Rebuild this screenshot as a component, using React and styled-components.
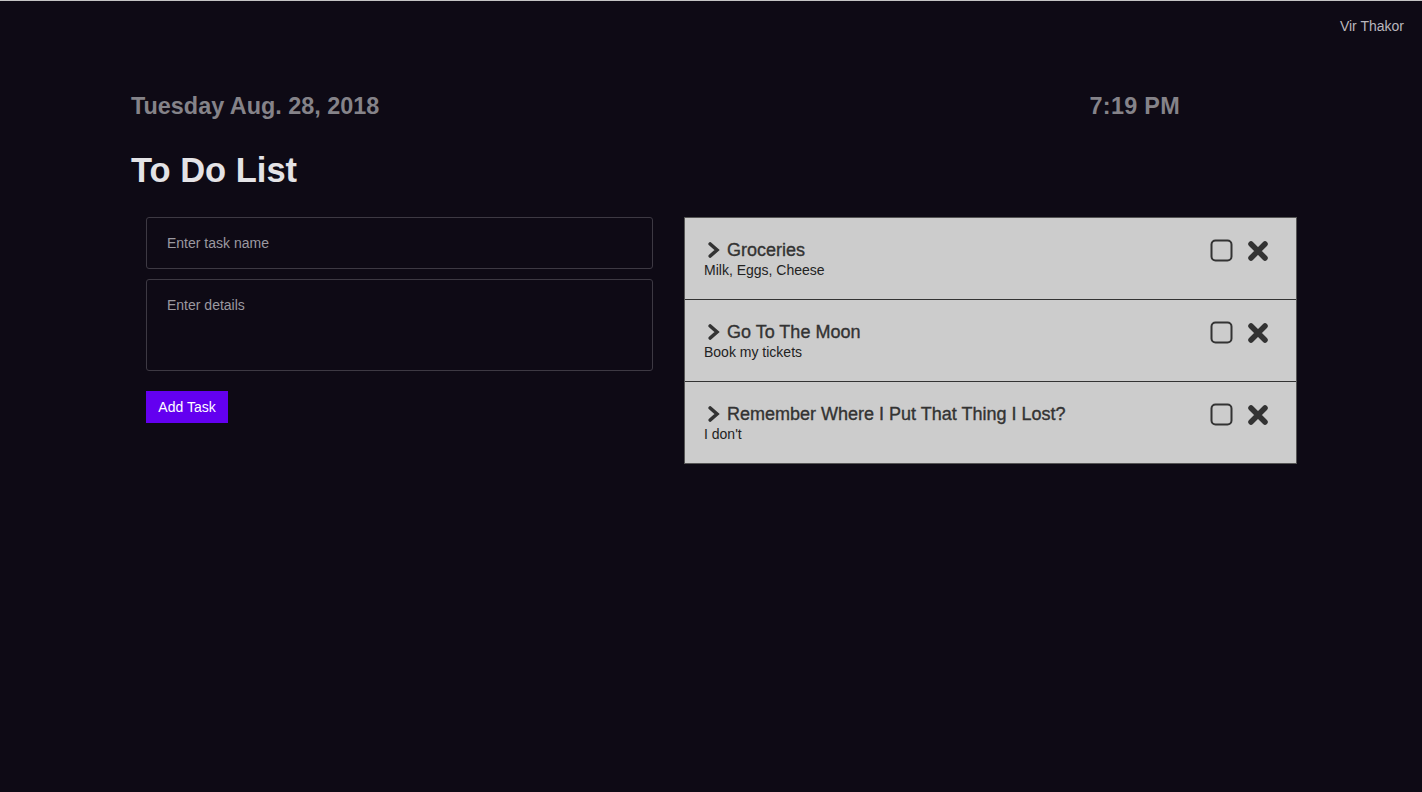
import React from "react";
import styled, { createGlobalStyle } from "styled-components";

const tasks = [
  { id: 1, name: "Groceries", details: "Milk, Eggs, Cheese" },
  { id: 2, name: "Go To The Moon", details: "Book my tickets" },
  { id: 3, name: "Remember Where I Put That Thing I Lost?", details: "I don't" },
];

const Chevron = () => (
  <svg width="13" height="16" viewBox="0 0 13 16">
    <path d="M3.2 2 L10 8 L3.2 14" fill="none" stroke="#333" strokeWidth="3.6" strokeLinejoin="miter" strokeLinecap="round" />
  </svg>
);

const Box = () => (
  <svg width="23" height="23" viewBox="0 0 23 23">
    <rect x="1.5" y="1.5" width="20" height="20" rx="4" fill="none" stroke="#333" strokeWidth="2" />
  </svg>
);

const Cross = () => (
  <svg width="22" height="22" viewBox="0 0 22 22">
    <path d="M4 4 L18 18 M18 4 L4 18" stroke="#333" strokeWidth="5.5" strokeLinecap="round" />
  </svg>
);

const App = () => {
  return (
    <>
      <GlobalStyle />
      <Page>
        <TopBar>
          <UserName>Vir Thakor</UserName>
        </TopBar>
        <Main>
          <DateRow>
            <DateText>Tuesday Aug. 28, 2018</DateText>
            <TimeText>7:19 PM</TimeText>
          </DateRow>
          <Title>To Do List</Title>
          <Columns>
            <Form>
              <Field placeholder="Enter task name" />
              <Details placeholder="Enter details" />
              <AddButton>Add Task</AddButton>
            </Form>
            <TaskList>
              {tasks.map((task) => (
                <TaskItem key={task.id}>
                  <TaskText>
                    <TaskName>
                      <Chevron />
                      {task.name}
                    </TaskName>
                    <TaskDetails>{task.details}</TaskDetails>
                  </TaskText>
                  <Actions>
                    <Box />
                    <Cross />
                  </Actions>
                </TaskItem>
              ))}
            </TaskList>
          </Columns>
        </Main>
      </Page>
    </>
  );
};

export default App;

const GlobalStyle = createGlobalStyle`
  body {
    margin: 0;
    background-color: #0e0a15;
    font-family: "Liberation Sans", Arial, sans-serif;
  }
`;

const Page = styled.div`
  min-height: 792px;
  border-top: 1px solid #c4c4c4;
  box-sizing: border-box;
`;

const TopBar = styled.header`
  display: flex;
  justify-content: flex-end;
  padding: 17px 18px 0 0;
`;

const UserName = styled.span`
  color: #b9b7bd;
  font-size: 14px;
  line-height: 16px;
`;

const Main = styled.main`
  padding: 0 0 0 131px;
`;

const DateRow = styled.div`
  display: flex;
  width: 1049px;
  justify-content: space-between;
  margin-top: 58px;
`;

const DateText = styled.h2`
  margin: 0;
  color: #858389;
  font-size: 23.4px;
  line-height: 28px;
  font-weight: bold;
`;

const TimeText = styled(DateText)`
  letter-spacing: 0.3px;
`;

const Title = styled.h1`
  margin: 30px 0 0;
  color: #e4e3e6;
  font-size: 34.5px;
  line-height: 40px;
  font-weight: bold;
`;

const Columns = styled.div`
  display: flex;
  align-items: flex-start;
  gap: 31px;
  margin-top: 27px;
  padding-left: 15px;
`;

const Form = styled.div`
  width: 507px;
  display: flex;
  flex-direction: column;
  align-items: flex-start;
`;

const Field = styled.input`
  box-sizing: border-box;
  width: 100%;
  height: 52px;
  padding: 0 20px;
  background: transparent;
  border: 1px solid #3d3943;
  border-radius: 3px;
  color: #ddd;
  font-family: inherit;
  font-size: 14px;
  outline: none;
  &::placeholder {
    color: #9b99a0;
  }
`;

const Details = styled.textarea`
  box-sizing: border-box;
  width: 100%;
  height: 92px;
  margin-top: 10px;
  padding: 17px 20px;
  background: transparent;
  border: 1px solid #3d3943;
  border-radius: 3px;
  color: #ddd;
  font-family: inherit;
  font-size: 14px;
  resize: none;
  outline: none;
  &::placeholder {
    color: #9b99a0;
  }
`;

const AddButton = styled.button`
  margin-top: 20px;
  height: 32px;
  width: 82px;
  border: none;
  background-color: #6300f0;
  color: #fff;
  font-family: inherit;
  font-size: 14px;
  padding: 0;
`;

const TaskList = styled.ul`
  list-style: none;
  margin: 0;
  padding: 0;
  width: 611px;
  background-color: #cccccc;
  border: 1px solid #555;
`;

const TaskItem = styled.li`
  display: flex;
  justify-content: space-between;
  align-items: flex-start;
  height: 81px;
  box-sizing: border-box;
  padding: 22px 27px 0 19px;
  & + & {
    border-top: 1px solid #333;
    height: 82px;
  }
`;

const TaskText = styled.div`
  display: flex;
  flex-direction: column;
`;

const TaskName = styled.div`
  display: flex;
  align-items: center;
  gap: 7px;
  padding-left: 3px;
  color: #333;
  font-size: 18px;
  line-height: 20px;
  -webkit-text-stroke: 0.35px #333;
`;

const TaskDetails = styled.div`
  margin-top: 2px;
  color: #222;
  font-size: 14px;
  line-height: 16px;
`;

const Actions = styled.div`
  display: flex;
  align-items: center;
  gap: 14px;
  margin-top: -1px;
`;
